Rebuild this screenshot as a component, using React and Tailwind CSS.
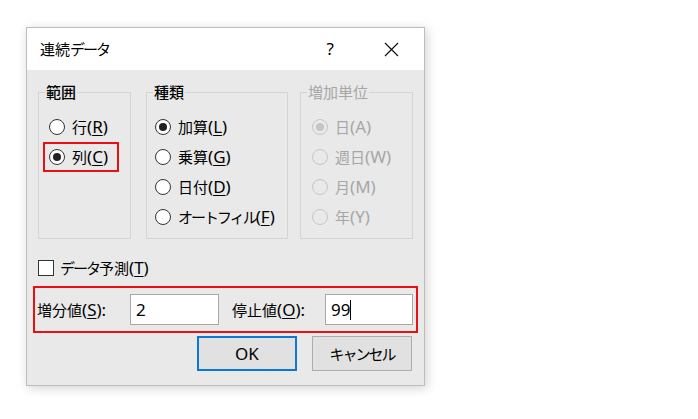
import React from 'react'

// Windows "連続データ" (Series) dialog

const Key = ({ k, plain }) => (
    <span className="text-[17px] leading-none">
        ({plain ? k : <span className="underline underline-offset-[2px]">{k}</span>})
    </span>
)

// katakana in the original font runs narrower
const Kana = ({ children }) => <span className="tracking-[-2px]">{children}</span>

const Radio = ({ checked, disabled, label, k, pad = '' }) => {
    return (
        <div className={`flex items-center h-[30px] gap-[7px] ${pad}`}>
            <span
                className={`w-4 h-4 shrink-0 rounded-full border flex items-center justify-center ${disabled ? 'border-[#c6c6c6]' : 'border-[#333] bg-white'}`}
            >
                {checked && (
                    <span className={`w-2 h-2 rounded-full ${disabled ? 'bg-[#c6c6c6]' : 'bg-[#222]'}`} />
                )}
            </span>
            <span className={`whitespace-nowrap leading-5 ${disabled ? 'text-[#a6a6a6]' : 'text-black'}`}>
                {label}
                <Key k={k} plain={disabled} />
            </span>
        </div>
    )
}

const Group = ({ title, disabled, width, inner, children }) => {
    return (
        <fieldset className={`border border-[#d4d4d4] px-0 pb-[6px] ${width}`}>
            <legend className={`ml-[6px] px-[1px] leading-4 whitespace-nowrap ${disabled ? 'text-[#a6a6a6]' : 'text-black font-medium'}`}>
                {title}
            </legend>
            <div className={`pt-[12px] flex flex-col ${inner}`}>
                {children}
            </div>
        </fieldset>
    )
}

const App = () => {
    return (
        <div className="w-[698px] h-[419px] bg-white pl-[26px] pt-[27px] font-['Noto_Sans','Noto_Sans_CJK_JP',sans-serif] text-[15px]">
            <div className="w-[399px] h-[359px] bg-[#e9e9e9] border border-[#bdbdbd] shadow-[2px_2px_10px_rgba(0,0,0,0.18)] flex flex-col">

                {/* Title bar */}
                <div className="h-[42px] bg-white flex items-center pl-[13px] shrink-0">
                    <span className="leading-5 text-black">連続<Kana>データ</Kana></span>
                    <span className="ml-auto text-[17px] leading-5 text-black">?</span>
                    <svg className="ml-[50px] mr-[25px]" width="15" height="15" viewBox="0 0 15 15">
                        <path d="M1 1 L14 14 M14 1 L1 14" stroke="#111" strokeWidth="1.2" fill="none" />
                    </svg>
                </div>

                {/* Groups */}
                <div className="flex items-stretch pl-[11px] pt-[14px]">
                    <Group title="範囲" width="w-[93px]" inner="pl-[10px]">
                        <Radio label="行" k="R" />
                        <div className="ml-[-6px] w-[76px] h-[30px] border-2 border-[#e81010] pl-[4px] flex items-center">
                            <Radio checked label="列" k="C" />
                        </div>
                    </Group>
                    <Group title="種類" width="w-[142px] ml-[15px]" inner="pl-[8px]">
                        <Radio checked label="加算" k="L" />
                        <Radio label="乗算" k="G" />
                        <Radio label="日付" k="D" />
                        <Radio label={<Kana>オートフィル</Kana>} k="F" />
                    </Group>
                    <Group title="増加単位" disabled width="w-[113px] ml-[12px]" inner="pl-[11px]">
                        <Radio checked disabled label="日" k="A" />
                        <Radio disabled label="週日" k="W" />
                        <Radio disabled label="月" k="M" />
                        <Radio disabled label="年" k="Y" />
                    </Group>
                </div>

                {/* Trend checkbox */}
                <div className="flex items-center h-[20px] mt-[19px] ml-[11px] gap-[6px]">
                    <span className="w-4 h-4 border border-[#333] bg-white" />
                    <span className="leading-5 text-black"><Kana>データ</Kana>予測<Key k="T" /></span>
                </div>

                {/* Step / stop values */}
                <div className="ml-[6px] mt-[8px] w-[385px] h-[47px] border-2 border-[#e81010] flex items-center pl-[2px]">
                    <span className="w-[82px] leading-5 text-black whitespace-nowrap">
                        増分値<Key k="S" /><span className="text-[17px]">:</span>
                    </span>
                    <div className="ml-[11px] w-[89px] h-[31px] bg-white border border-[#a8a8a8] flex items-center pl-[5px] text-[17px] leading-5">
                        2
                    </div>
                    <span className="ml-[13px] w-[82px] leading-5 text-black whitespace-nowrap">
                        停止値<Key k="O" /><span className="text-[17px]">:</span>
                    </span>
                    <div className="ml-[11px] w-[88px] h-[31px] bg-white border border-[#a8a8a8] flex items-center pl-[5px] text-[17px] leading-5">
                        99<span className="w-px h-[20px] bg-black" />
                    </div>
                </div>

                {/* Buttons */}
                <div className="flex justify-end gap-[15px] pr-[12px] mt-[3px]">
                    <button className="w-[100px] h-[35px] bg-[#e1e1e1] border-2 border-[#0a78d7] text-black text-[17px] leading-5">
                        OK
                    </button>
                    <button className="w-[100px] h-[35px] bg-[#e1e1e1] border border-[#adadad] text-black leading-5">
                        <Kana>キャンセル</Kana>
                    </button>
                </div>
            </div>
        </div>
    )
}

export default App
